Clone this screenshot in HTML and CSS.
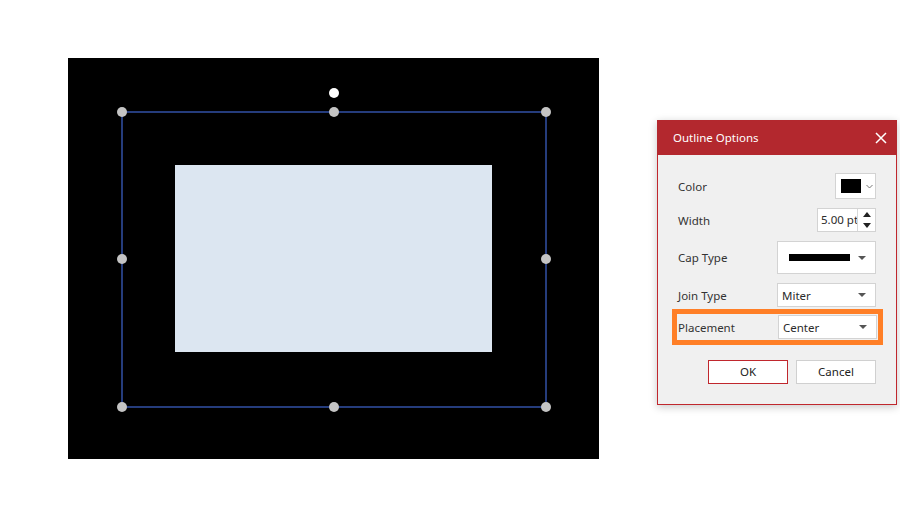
FILE: index.html
```html
<html>
<head>
	<link rel="stylesheet" href="styles.css">
</head>
<body>
	<div class='page'>
		<div class='canvas'>
			<svg width='531' height='401' viewBox='0 0 531 401'>
				<rect x='107' y='107' width='317' height='187' fill='#dce6f1'/>
				<rect x='54' y='54' width='424' height='295' fill='none' stroke='#2f4b9c' stroke-width='1.6'/>
				<circle cx='266' cy='35' r='5' fill='#ffffff'/>
				<circle cx='54' cy='54' r='5' fill='#c4c4c4'/>
				<circle cx='266' cy='54' r='5' fill='#c4c4c4'/>
				<circle cx='478' cy='54' r='5' fill='#c4c4c4'/>
				<circle cx='54' cy='201' r='5' fill='#c4c4c4'/>
				<circle cx='478' cy='201' r='5' fill='#c4c4c4'/>
				<circle cx='54' cy='349' r='5' fill='#c4c4c4'/>
				<circle cx='266' cy='349' r='5' fill='#c4c4c4'/>
				<circle cx='478' cy='349' r='5' fill='#c4c4c4'/>
			</svg>
		</div>

		<div class='dialog'>
			<div class='header'>
				<span>Outline Options</span>
				<svg class='close' width='12' height='12' viewBox='0 0 12 12'>
					<path d='M1 1 L11 11 M11 1 L1 11' stroke='#ffffff' stroke-width='1.5'/>
				</svg>
			</div>
			<div class='content'>
				<div class='row color-row'>
					<div class='label'>Color</div>
					<div class='color-pick'>
						<div class='swatch'></div>
						<svg width='7' height='5' viewBox='0 0 7 5'><path d='M0.5 1 L3.5 4 L6.5 1' fill='none' stroke='#666' stroke-width='0.9'/></svg>
					</div>
				</div>
				<div class='row width-row'>
					<div class='label'>Width</div>
					<div class='spin'>
						<div class='spin-text'>5.00 pt</div>
						<div class='spin-btns'>
							<svg width='8' height='5' viewBox='0 0 8 5'><path d='M0 5 L4 0 L8 5 Z' fill='#222'/></svg>
							<svg width='8' height='5' viewBox='0 0 8 5'><path d='M0 0 L4 5 L8 0 Z' fill='#222'/></svg>
						</div>
					</div>
				</div>
				<div class='row cap-row'>
					<div class='label'>Cap Type</div>
					<div class='select cap'>
						<div class='cap-line'></div>
						<div class='arrow'></div>
					</div>
				</div>
				<div class='row join-row'>
					<div class='label'>Join Type</div>
					<div class='select'>
						<span>Miter</span>
						<div class='arrow'></div>
					</div>
				</div>
				<div class='row place-row'>
					<div class='label'>Placement</div>
					<div class='select'>
						<span>Center</span>
						<div class='arrow'></div>
					</div>
				</div>
				<div class='buttons'>
					<div class='btn ok'>OK</div>
					<div class='btn'>Cancel</div>
				</div>
			</div>
		</div>
	</div>
</body>
</html>
```

FILE: styles.css
```css
body {
	margin: 0;
	background: #ffffff;
	font-family: 'Noto Sans', 'Open Sans', sans-serif;
	font-size: 11.5px;
	color: #2b2b2b;
}

.page {
	display: flex;
	align-items: flex-start;
	padding: 58px 0 0 68px;
}

.canvas {
	width: 531px;
	height: 401px;
	background: #000000;
}

.canvas svg {
	display: block;
}

.dialog {
	width: 238px;
	margin: 62px 0 0 58px;
	border: 1px solid #c0272d;
	border-top: none;
	background: #f0f0f0;
	box-shadow: 0 2px 8px rgba(0, 0, 0, 0.22);
}

.header {
	height: 35px;
	margin: 0 -1px;
	padding: 0 10px 0 16px;
	background: #b3282e;
	color: #ffffff;
	display: flex;
	align-items: center;
	justify-content: space-between;
	font-size: 11.5px;
}

.close {
	display: block;
}

.content {
	padding: 18px 20px 20px 20px;
	display: flex;
	flex-direction: column;
}

.row {
	display: flex;
	align-items: center;
	justify-content: space-between;
	margin-bottom: 9px;
}

.label {
	color: #333333;
}

.color-pick {
	height: 24px;
	border: 1px solid #d3d3d3;
	background: #ffffff;
	display: flex;
	align-items: center;
	gap: 5px;
	padding-left: 5px;
	box-sizing: content-box;
	width: 34px;
}

.swatch {
	width: 20px;
	height: 14px;
	background: #000000;
}

.spin {
	display: flex;
	height: 22px;
	border: 1px solid #d3d3d3;
	background: #ffffff;
}

.spin-text {
	width: 40px;
	padding-left: 3px;
	overflow: hidden;
	white-space: nowrap;
	line-height: 22px;
	border-right: 1px solid #d8d8d8;
	box-sizing: border-box;
}

.spin-btns {
	width: 17px;
	display: flex;
	flex-direction: column;
	align-items: center;
	justify-content: center;
	gap: 6px;
}

.spin-btns svg {
	display: block;
}

.select {
	height: 22px;
	border: 1px solid #d3d3d3;
	background: #ffffff;
	display: flex;
	align-items: center;
	justify-content: space-between;
	padding: 0 9px 0 4px;
	box-sizing: content-box;
	width: 84px;
}

.select.cap {
	height: 31px;
	padding-left: 11px;
	width: 77px;
}

.cap-line {
	width: 61px;
	height: 7px;
	background: #000000;
}

.arrow {
	width: 0;
	height: 0;
	border-left: 4px solid transparent;
	border-right: 4px solid transparent;
	border-top: 4px solid #555555;
}

.join-row {
	margin-bottom: 8px;
}

.place-row {
	outline: 5px solid #ff7f27;
	outline-offset: 1px;
	margin-right: -1px;
}

.buttons {
	display: flex;
	justify-content: flex-end;
	gap: 8px;
	margin-top: 12px;
}

.btn {
	width: 78px;
	height: 22px;
	line-height: 22px;
	text-align: center;
	border: 1px solid #d0d0d0;
	background: #ffffff;
	color: #222222;
}

.btn.ok {
	border-color: #c0272d;
}
```
